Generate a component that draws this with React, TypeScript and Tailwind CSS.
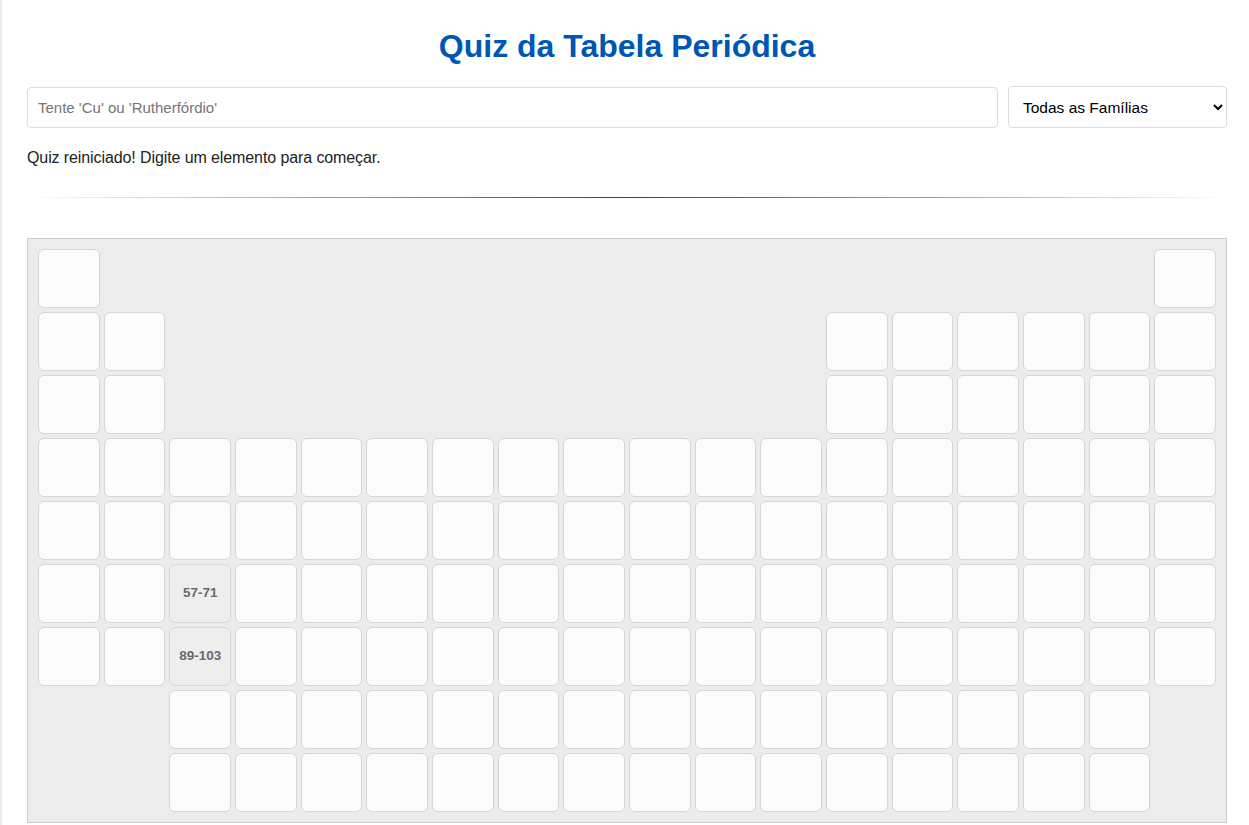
import React from "react";

type Cell = { type: "empty" | "el" | "special"; label?: string };

function buildRows(): Cell[][] {
  const rows: Cell[][] = [];
  const E: Cell = { type: "empty" };
  const X: Cell = { type: "el" };
  const row = (fn: (c: number) => Cell) => Array.from({ length: 18 }, (_, i) => fn(i + 1));
  rows.push(row((c) => (c === 1 || c === 18 ? X : E)));
  rows.push(row((c) => (c <= 2 || c >= 13 ? X : E)));
  rows.push(row((c) => (c <= 2 || c >= 13 ? X : E)));
  rows.push(row(() => X));
  rows.push(row(() => X));
  rows.push(row((c) => (c === 3 ? { type: "special", label: "57-71" } : X)));
  rows.push(row((c) => (c === 3 ? { type: "special", label: "89-103" } : X)));
  rows.push(row((c) => (c >= 3 && c <= 17 ? X : E)));
  rows.push(row((c) => (c >= 3 && c <= 17 ? X : E)));
  return rows;
}

export default function App() {
  const rows = buildRows();
  return (
    <div
      className="min-h-screen bg-white border-l-[2px] border-[#ececec]"
      style={{ fontFamily: '"Liberation Sans", Arial, sans-serif' }}
    >
      <div className="w-[1200px] ml-[25px] pt-[28px] pb-[2px]">
        <h1 className="text-center text-[32px] leading-[36px] font-bold text-[#0056b3] mb-[22px]">
          Quiz da Tabela Periódica
        </h1>
        <div className="flex gap-[10px] items-center">
          <input
            type="text"
            placeholder="Tente 'Cu' ou 'Rutherfórdio'"
            className="w-[971px] h-[41px] border border-[#dcdcdc] rounded-[4px] px-[10px] text-[15px] text-[#222] placeholder:text-[#757575] outline-none bg-white"
          />
          <select className="w-[219px] h-[42px] border border-[#dcdcdc] rounded-[4px] pl-[10px] pr-[4px] text-[15.5px] text-black bg-white outline-none">
            <option>Todas as Famílias</option>
          </select>
        </div>
        <p className="mt-[20px] text-[16px] tracking-[-0.1px] leading-[20px] text-[#222]">
          Quiz reiniciado! Digite um elemento para começar.
        </p>
        <div className="mt-[29px] h-px bg-[linear-gradient(to_right,rgba(0,0,0,0),rgba(0,0,0,0.75),rgba(0,0,0,0))]" />
        <div className="mt-[40px] bg-[#ececec] border border-[#cccccc] p-[10px]">
          <div className="grid grid-cols-[repeat(18,minmax(0,1fr))] gap-[4px]">
            {rows.flatMap((r, ri) =>
              r.map((c, ci) => {
                const key = `${ri}-${ci}`;
                if (c.type === "empty") return <div key={key} className="h-[59px]" />;
                if (c.type === "special")
                  return (
                    <div
                      key={key}
                      className="h-[59px] rounded-[6px] border border-[#d6d6d6] bg-[#eeeeee] flex items-center justify-center text-[13.5px] font-bold text-[#6a6a6a]"
                    >
                      {c.label}
                    </div>
                  );
                return (
                  <div key={key} className="h-[59px] rounded-[6px] border border-[#d6d6d6] bg-[#fcfcfc]" />
                );
              })
            )}
          </div>
        </div>
      </div>
    </div>
  );
}
